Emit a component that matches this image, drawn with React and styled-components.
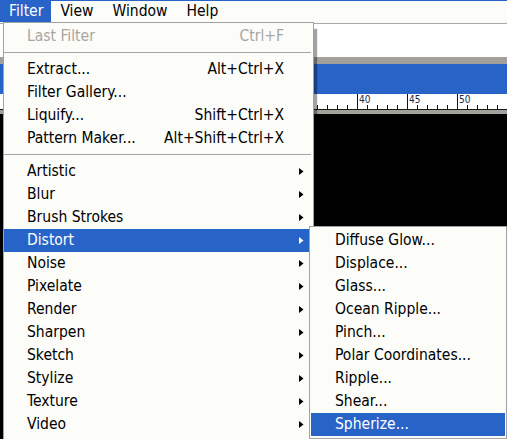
import React from "react";
import styled, { createGlobalStyle } from "styled-components";

const GlobalStyle = createGlobalStyle`
  html, body { margin: 0; padding: 0; background: #ffffff; }
  body { font-family: "DejaVu Sans Condensed", "DejaVu Sans", Verdana, sans-serif; font-stretch: condensed; }
`;

const BLUE = "#2863c8";

const Screen = styled.div`
  position: relative;
  width: 507px;
  height: 439px;
  overflow: hidden;
  display: flex;
  flex-direction: column;
  background: #ffffff;
`;

const MenuBar = styled.div`
  display: flex;
  align-items: flex-start;
  height: 22px;
  border-top: 1px solid ${BLUE};
  background: #fcfcf9;
`;

const MenuBarItem = styled.div`
  height: 21px;
  line-height: 21px;
  padding: 0 ${(p) => p.$pr || 9}px 0 9px;
  font-size: 15.5px;
  color: ${(p) => (p.$active ? "#ffffff" : "#000000")};
  background: ${(p) => (p.$active ? BLUE : "transparent")};
`;

const Workspace = styled.div`
  flex: 1;
  display: flex;
  flex-direction: column;
`;

const OptionsBar = styled.div`
  height: 33px;
  border-top: 1px solid #a8a8a8;
  background: #ffffff;
`;

const GrayStrip = styled.div`
  height: ${(p) => p.$h}px;
  background: #a3a09b;
`;

const TitleBar = styled.div`
  height: 30px;
  background: ${BLUE};
`;

const RulerBox = styled.div`
  height: 15px;
  background: #ffffff;
  border-bottom: 1px solid #1a1a1a;
  svg { display: block; }
`;

const Canvas = styled.div`
  flex: 1;
  background: #000000;
`;

const Menu = styled.div`
  position: absolute;
  left: ${(p) => p.$left}px;
  top: ${(p) => p.$top}px;
  width: ${(p) => p.$width}px;
  box-sizing: border-box;
  border: 1px solid #a2a2a2;
  background: #fcfcf9;
  padding: 2px 0 ${(p) => p.$pb}px;
  box-shadow: ${(p) => (p.$shadow ? "4px 6px 1px -1px rgba(0,0,0,0.36)" : "none")};
`;

const Row = styled.div`
  display: grid;
  grid-template-columns: 1fr auto 20px;
  align-items: center;
  height: 23px;
  margin: 0 ${(p) => (p.$sub ? 1 : 0)}px;
  padding: 0 9px 0 ${(p) => (p.$sub ? 24 : 23)}px;
  font-size: 15.5px;
  line-height: 23px;
  white-space: nowrap;
  color: ${(p) => (p.$active ? "#ffffff" : p.$disabled ? "#a7a6a2" : "#000000")};
  background: ${(p) => (p.$active ? BLUE : "transparent")};
`;

const Shortcut = styled.span`
  text-align: right;
`;

const ArrowCell = styled.span`
  display: flex;
  justify-content: flex-end;
  align-items: center;
  svg { display: block; }
`;

const Separator = styled.div`
  height: 10px;
  box-sizing: border-box;
  padding: 4px 2px 0 0;
  &::after {
    content: "";
    display: block;
    height: 1px;
    background: #a6a6a6;
  }
`;

const Arrow = ({ color }) => (
  <svg width="5" height="7" viewBox="0 0 5 7">
    <polygon points="0,0 4.5,3.5 0,7" fill={color} />
  </svg>
);

const Ruler = () => {
  const ticks = [];
  for (let x = 7; x < 520; x += 10) {
    const major = (x - 7) % 50 === 0;
    ticks.push(
      <line
        key={x}
        x1={x + 0.5}
        x2={x + 0.5}
        y1={major ? 0 : 11}
        y2={15}
        stroke="#111"
        strokeWidth="1"
      />
    );
    if (major && x > 320 && x < 490) {
      ticks.push(
        <text
          key={"t" + x}
          x={x + 2}
          y={9}
          fontSize="10"
          fill="#1c2a4a"
          fontFamily="DejaVu Sans, sans-serif"
        >
          {(x - 7) / 10 + 5}
        </text>
      );
    }
  }
  return (
    <svg width="507" height="15" viewBox="0 0 507 15">
      {ticks}
    </svg>
  );
};

const mainItems = [
  { label: "Last Filter", shortcut: "Ctrl+F", disabled: true },
  { sep: true },
  { label: "Extract...", shortcut: "Alt+Ctrl+X" },
  { label: "Filter Gallery..." },
  { label: "Liquify...", shortcut: "Shift+Ctrl+X" },
  { label: "Pattern Maker...", shortcut: "Alt+Shift+Ctrl+X" },
  { sep: true },
  { label: "Artistic", sub: true },
  { label: "Blur", sub: true },
  { label: "Brush Strokes", sub: true },
  { label: "Distort", sub: true, active: true },
  { label: "Noise", sub: true },
  { label: "Pixelate", sub: true },
  { label: "Render", sub: true },
  { label: "Sharpen", sub: true },
  { label: "Sketch", sub: true },
  { label: "Stylize", sub: true },
  { label: "Texture", sub: true },
  { label: "Video", sub: true },
];

const distortItems = [
  "Diffuse Glow...",
  "Displace...",
  "Glass...",
  "Ocean Ripple...",
  "Pinch...",
  "Polar Coordinates...",
  "Ripple...",
  "Shear...",
  "Spherize...",
];

export default function App() {
  return (
    <>
      <GlobalStyle />
      <Screen>
        <MenuBar>
          <MenuBarItem $active $pr={8}>Filter</MenuBarItem>
          <MenuBarItem $pr={10}>View</MenuBarItem>
          <MenuBarItem $pr={10}>Window</MenuBarItem>
          <MenuBarItem>Help</MenuBarItem>
        </MenuBar>
        <Workspace>
          <OptionsBar />
          <GrayStrip $h={7} />
          <TitleBar />
          <RulerBox>
            <Ruler />
          </RulerBox>
          <GrayStrip $h={4} />
          <Canvas />
        </Workspace>

        <Menu $left={3} $top={22} $width={311} $pb={8} $shadow>
          {mainItems.map((it, i) =>
            it.sep ? (
              <Separator key={i} />
            ) : (
              <Row key={i} $active={it.active} $disabled={it.disabled}>
                <span>{it.label}</span>
                <Shortcut>{it.shortcut || ""}</Shortcut>
                <ArrowCell>
                  {it.sub && <Arrow color={it.active ? "#ffffff" : "#000000"} />}
                </ArrowCell>
              </Row>
            )
          )}
        </Menu>

        <Menu $left={309} $top={226} $width={198} $pb={2}>
          {distortItems.map((label, i) => (
            <Row key={label} $sub $active={i === distortItems.length - 1}>
              <span>{label}</span>
              <Shortcut />
              <ArrowCell />
            </Row>
          ))}
        </Menu>
      </Screen>
    </>
  );
}
